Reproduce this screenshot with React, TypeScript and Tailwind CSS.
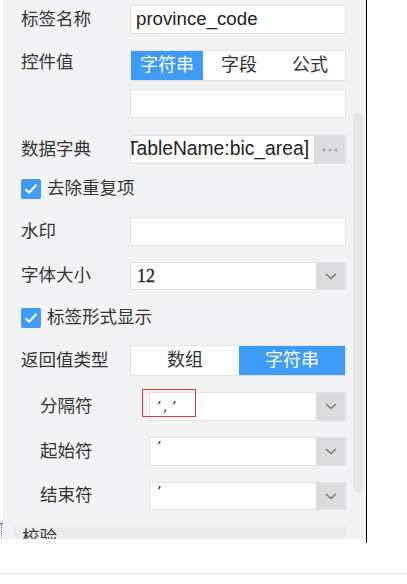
import React from "react";

const CJK = "font-['Liberation_Sans','Noto_Sans_CJK_SC',sans-serif]";

function Chevron() {
  return (
    <svg width="12" height="7" viewBox="0 0 12 7" fill="none">
      <path d="M1 1l5 4.5L11 1" stroke="#777" strokeWidth="1.6" />
    </svg>
  );
}

function Label({ children, sub }: { children: React.ReactNode; sub?: boolean }) {
  return (
    <div
      className={`shrink-0 text-[17.5px] leading-none text-[#333] ${sub ? "w-[128px] pl-[19px]" : "w-[109px]"}`}
    >
      {children}
    </div>
  );
}

function Input({ children, h = 29, w = 216 }: { children?: React.ReactNode; h?: number; w?: number }) {
  return (
    <div
      className="flex items-center overflow-hidden border border-[#e2e2e4] bg-white px-[5px] text-[17px] text-[#333]"
      style={{ height: h, width: w }}
    >
      {children}
    </div>
  );
}

function Select({ children, w = 216, h = 29 }: { children?: React.ReactNode; w?: number; h?: number }) {
  return (
    <div className="flex border border-[#e2e2e4] bg-white" style={{ width: w, height: h }}>
      <div className="flex flex-1 items-center overflow-hidden px-[6px] text-[16px] text-[#333]">{children}</div>
      <div className="flex w-[29px] items-center justify-center bg-[#dcdcdf]">
        <Chevron />
      </div>
    </div>
  );
}

function Check() {
  return (
    <div className="flex h-[20px] w-[20px] items-center justify-center rounded-[2px] bg-[#3f9cf6]">
      <svg width="14" height="12" viewBox="0 0 14 12" fill="none">
        <path d="M1.5 6.2l3.6 3.6L12.5 1.8" stroke="#fff" strokeWidth="2" />
      </svg>
    </div>
  );
}

export default function App() {
  return (
    <div className={`relative h-[584px] w-[407px] bg-white ${CJK}`}>
      <div className="flex">
        <div className="w-[3px] shrink-0">
          <div className="mt-[523px] h-[1px] w-[3px] bg-[#3a6fd8]" />
          <div className="ml-[1px] h-[14px] w-0 border-l border-dotted border-[#3a6fd8]" />
        </div>
        <div className="h-[543px] w-[364px] border-r border-black">
          <div className="flex h-[539px] overflow-hidden bg-[#f3f3f5]">
            <div className="flex w-[343px] shrink-0 flex-col pl-[18px]">
              {/* 标签名称 */}
              <div className="mt-[5px] flex items-center">
                <Label>标签名称</Label>
                <Input>
                  <span className="font-['Liberation_Sans',sans-serif] text-[18.7px] text-[#222]">province_code</span>
                </Input>
              </div>
              {/* 控件值 */}
              <div className="mt-[16px] flex items-start">
                <div className="pt-[4px]">
                  <Label>控件值</Label>
                </div>
                <div className="flex h-[31px] w-[216px] border border-[#e2e2e4] bg-white text-[18px]">
                  <div className="flex w-[72px] items-center justify-center bg-[#3f9cf6] text-white">字符串</div>
                  <div className="flex w-[72px] items-center justify-center text-[#333]">字段</div>
                  <div className="flex flex-1 items-center justify-center text-[#333]">公式</div>
                </div>
              </div>
              <div className="mt-[8px] flex">
                <Label>{""}</Label>
                <Input />
              </div>
              {/* 数据字典 */}
              <div className="mt-[17px] flex items-center">
                <Label>数据字典</Label>
                <div className="flex h-[29px] w-[216px] border border-[#e2e2e4]">
                  <div className="flex flex-1 items-center justify-end overflow-hidden whitespace-nowrap bg-white pr-[5px] font-['Liberation_Sans',sans-serif] text-[19.3px] text-[#222]">
                    [TableName:bic_area]
                  </div>
                  <div className="flex w-[31px] items-center justify-center bg-[#dcdcdf]">
                    <svg width="16" height="4" viewBox="0 0 16 4">
                      <circle cx="2" cy="2" r="1.3" fill="#999" />
                      <circle cx="8" cy="2" r="1.3" fill="#999" />
                      <circle cx="14" cy="2" r="1.3" fill="#999" />
                    </svg>
                  </div>
                </div>
              </div>
              {/* 去除重复项 */}
              <div className="mt-[15px] flex items-center gap-[6px]">
                <Check />
                <span className="text-[17.5px] leading-none text-[#333]">去除重复项</span>
              </div>
              {/* 水印 */}
              <div className="mt-[18px] flex items-center">
                <Label>水印</Label>
                <Input />
              </div>
              {/* 字体大小 */}
              <div className="mt-[16px] flex items-center">
                <Label>字体大小</Label>
                <Select h={28}>
                  <span className="font-['Liberation_Serif',serif] text-[18px] text-[#222] [-webkit-text-stroke:0.3px_#222]">12</span>
                </Select>
              </div>
              {/* 标签形式显示 */}
              <div className="mt-[18px] flex items-center gap-[6px]">
                <Check />
                <span className="text-[17.5px] leading-none text-[#333]">标签形式显示</span>
              </div>
              {/* 返回值类型 */}
              <div className="mt-[17px] flex items-center">
                <Label>返回值类型</Label>
                <div className="flex h-[31px] w-[216px] border border-[#e2e2e4] bg-white text-[18px]">
                  <div className="flex w-[108px] items-center justify-center text-[#333]">数组</div>
                  <div className="flex flex-1 items-center justify-center bg-[#3f9cf6] text-white">字符串</div>
                </div>
              </div>
              {/* 分隔符 */}
              <div className="mt-[16px] flex items-center">
                <Label sub>分隔符</Label>
                <div className="relative">
                  <Select w={197}>
                    <span className="font-['DejaVu_Sans',sans-serif] text-[14px] italic tracking-[3px] text-[#333]">
                      ’,’
                    </span>
                  </Select>
                  <div className="absolute left-[-7px] top-[-3px] h-[28px] w-[54px] border border-[#e53935]" />
                </div>
              </div>
              {/* 起始符 */}
              <div className="mt-[16px] flex items-center">
                <Label sub>起始符</Label>
                <Select w={197}>
                  <span className="-mt-[10px] font-['DejaVu_Sans',sans-serif] text-[14px] italic text-[#333]">’</span>
                </Select>
              </div>
              {/* 结束符 */}
              <div className="mt-[16px] flex items-center">
                <Label sub>结束符</Label>
                <Select w={197} h={28}>
                  <span className="-mt-[10px] font-['DejaVu_Sans',sans-serif] text-[14px] italic text-[#333]">’</span>
                </Select>
              </div>
              {/* 校验 */}
              <div className="-ml-[7px] mt-[16px] h-[30px] w-[332px] bg-[#ebebeb] pl-[8px] pt-[3px] text-[17.5px] leading-none text-[#333]">
                校验
              </div>
            </div>
            <div className="ml-[7px] mt-[113px] h-[380px] w-[10px] shrink-0 rounded-[4px] bg-[#e6e6e8]" />
          </div>
        </div>
      </div>
      <div className="mt-[30px] h-[1px] w-full bg-[#e3e3e3]" />
    </div>
  );
}
